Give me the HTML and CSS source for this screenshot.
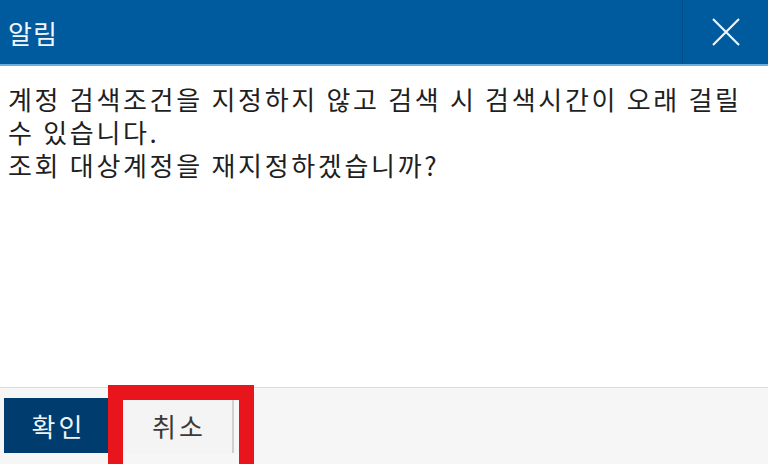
FILE: index.html
```html
<!DOCTYPE html>
<html>
<head>
<meta http-equiv="Content-Type" content="text/html; charset=utf-8"/>
<title>알림</title>
<link rel="stylesheet" href="styles.css">
</head>
<body>
<div class="dialog">
  <div class="dialog-head">
    <div class="dialog-title">알림</div>
    <div class="dialog-close">
      <svg width="30" height="30" viewBox="0 0 30 30">
        <path d="M2 2 L28 28 M28 2 L2 28" stroke="#eef4fa" stroke-width="2.2" fill="none"/>
      </svg>
    </div>
  </div>
  <div class="dialog-body">
    계정 검색조건을 지정하지 않고 검색 시 검색시간이 오래 걸릴 수 있습니다.<br>
    조회 대상계정을 재지정하겠습니까?
  </div>
  <div class="dialog-foot">
    <button class="btn btn-ok">확인</button>
    <div class="mark">
      <button class="btn btn-cancel">취소</button>
      <div class="mark-box"></div>
    </div>
  </div>
</div>
</body>
</html>
```

FILE: styles.css
```css
html, body {
  margin: 0;
  padding: 0;
  background: white;
}

body {
  font-family: "Noto Sans CJK KR", "Noto Sans", sans-serif;
  width: 768px;
  height: 464px;
  overflow: hidden;
}

.dialog {
  display: flex;
  flex-direction: column;
  height: 464px;
}

.dialog-head {
  display: flex;
  height: 64px;
  background-color: #005a9e;
  border-bottom: 2px solid #6aaee0;
}

.dialog-title {
  flex: 1;
  display: flex;
  align-items: center;
  padding-left: 8px;
  color: #f2f6fa;
  font-size: 26px;
  letter-spacing: 1px;
}

.dialog-close {
  width: 85px;
  display: flex;
  align-items: center;
  justify-content: center;
  border-left: 1px solid #004d8a;
}

.dialog-body {
  flex: 1;
  padding: 16px 8px 0 8px;
  font-size: 26px;
  line-height: 33px;
  letter-spacing: 2.7px;
  word-break: keep-all;
  color: #1f1f1f;
}

.dialog-foot {
  display: flex;
  align-items: flex-start;
  gap: 13px;
  height: 66px;
  padding: 10px 4px 0 4px;
  background-color: #f6f6f6;
  border-top: 1px solid #dcdcdc;
}

.btn {
  font-family: "Noto Sans CJK KR", "Noto Sans", sans-serif;
  font-size: 26px;
  letter-spacing: 3px;
  height: 55px;
  border: none;
  padding: 0 0 0 3px;
  margin: 0;
}

.btn-ok {
  width: 106px;
  background-color: #003c6e;
  color: #f0f4f8;
}

.btn-cancel {
  width: 111px;
  background-color: #f4f4f4;
  color: #3a3a3a;
  border-right: 2px solid #cfcfcf;
}

.mark {
  position: relative;
}

.mark-box {
  position: absolute;
  top: -13px;
  left: -15px;
  right: -20px;
  bottom: -25px;
  border: 15px solid #e8151d;
  border-bottom: none;
}
```
